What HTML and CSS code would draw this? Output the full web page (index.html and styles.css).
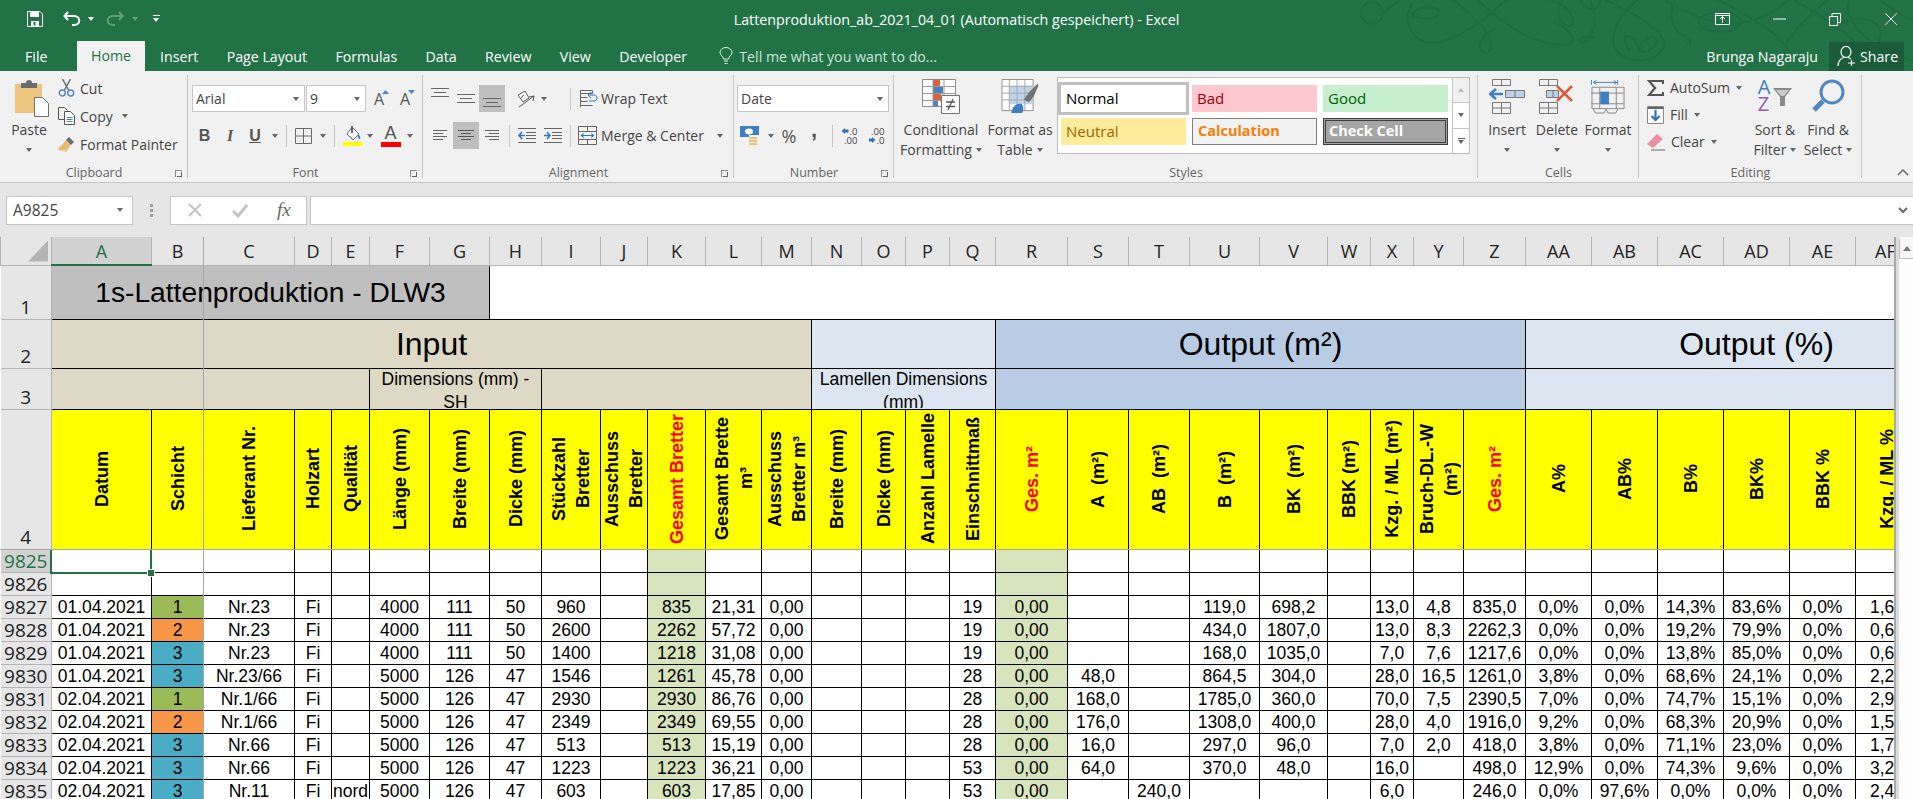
FILE: index.html
```html
<!DOCTYPE html>
<html lang="en">
<head>
<meta charset="utf-8">
<title>Lattenproduktion_ab_2021_04_01 - Excel</title>
<link rel="stylesheet" href="styles.css">
</head>
<body>
<header class="titlebar">
  <svg class="swirl" width="573" height="71" viewBox="1340 0 573 71" fill="none" stroke="#1e6d41" stroke-width="2">
    <ellipse cx="1372" cy="13" rx="11" ry="11"/>
    <path d="M1383 13C1392 6 1398 2 1402 -2"/>
    <path d="M1413 3C1405 14 1405 30 1420 40C1440 50 1475 30 1508 -2"/>
    <path d="M1412 14C1420 5 1438 6 1439 12C1440 19 1420 22 1412 14"/>
    <path d="M1452 -2C1470 15 1490 30 1491 44C1492 55 1480 56 1480 46C1480 38 1488 33 1495 28"/>
    <path d="M1475 -2C1500 20 1530 46 1565 45C1580 44 1572 30 1553 21"/>
    <path d="M1545 -2C1572 5 1575 20 1572 25C1565 30 1550 14 1565 -2"/>
    <path d="M1580 0C1590 15 1600 10 1600 0"/>
    <path d="M1590 0C1600 25 1590 42 1580 44C1578 36 1590 36 1594 38"/>
    <path d="M1600 -2C1630 10 1665 30 1664 45C1660 60 1640 63 1626 58C1605 48 1610 22 1640 -2"/>
    <path d="M1630 50C1620 38 1625 32 1632 38C1640 45 1640 55 1640 50C1640 40 1655 32 1657 40C1658 48 1645 55 1638 50"/>
    <path d="M1675 -2C1668 15 1672 32 1685 36C1692 40 1692 47 1686 44"/>
    <path d="M1665 0C1690 15 1740 45 1790 -2"/>
    <path d="M1715 -2C1760 22 1790 40 1790 58C1785 62 1780 50 1790 38C1800 24 1815 10 1830 -2"/>
    <ellipse cx="1720" cy="22" rx="21" ry="10"/>
    <path d="M1790 -2C1830 20 1860 40 1880 71"/>
    <path d="M1850 -2C1840 20 1870 50 1913 60"/>
    <path d="M1880 0C1900 15 1910 20 1913 20"/>
    <path d="M1835 30C1845 15 1875 15 1880 30C1885 45 1860 60 1840 50"/>
  </svg>
  <div class="title-row">
    <div class="qat">
      <svg class="ic-save" width="16" height="16" viewBox="0 0 16 16"><path d="M.5.5h12.5l2.5 2.5v12.5H.5z" fill="none" stroke="#fff"/><path d="M3 1h9v5H3z" fill="#fff"/><path d="M4 10h8v5.500H4z" fill="#fff"/><path d="M6.500 11h2v3.500h-2z" fill="#217346"/></svg>
      <svg class="ic-undo" width="19" height="16" viewBox="0 0 19 16" fill="none" stroke="#fff" stroke-width="2"><path d="M5 1L1.500 5 5 9"/><path d="M2 5h9c7 0 7 9 0 9h-2"/></svg>
      <span class="caret white undo-caret"></span>
      <svg class="ic-redo" width="19" height="16" viewBox="0 0 19 16" fill="none" stroke="#5f9f7c" stroke-width="2"><path d="M14 1l3.500 4L14 9"/><path d="M17 5H8c-7 0-7 9 0 9h2"/></svg>
      <span class="caret dim redo-caret"></span>
      <span class="qat-more"><span></span></span>
    </div>
    <div class="doc-title">Lattenproduktion_ab_2021_04_01 (Automatisch gespeichert) - Excel</div>
    <div class="window">
      <svg width="15" height="12" viewBox="0 0 15 12" fill="none" stroke="#fff"><path d="M.5.500h14v11H.5zM.5 2.500h14"/><path d="M7.500 10V4M5 6l2.500-2.500L10 6"/></svg>
      <svg width="13" height="12" viewBox="0 0 13 12" fill="none" stroke="#fff"><path d="M0 6h13"/></svg>
      <svg width="12" height="13" viewBox="0 0 12 13" fill="none" stroke="#fff"><path d="M.5 3.500h8v9h-8zM3 3.500V.5h8.500v9H8.500"/></svg>
      <svg width="14" height="14" viewBox="0 0 14 14" fill="none" stroke="#fff"><path d="M1 1l12 12M13 1L1 13"/></svg>
    </div>
  </div>
  <nav class="tabs">
    <span class="tab file">File</span>
    <span class="tab home">Home</span>
    <span class="tab">Insert</span>
    <span class="tab">Page Layout</span>
    <span class="tab">Formulas</span>
    <span class="tab">Data</span>
    <span class="tab">Review</span>
    <span class="tab">View</span>
    <span class="tab">Developer</span>
    <span class="tellme">
      <svg width="14" height="18" viewBox="0 0 14 18" fill="none" stroke="#e4f1ea"><path d="M4.500 12C4 9 1 8 1 5.500a6 5 0 0 1 12 0C13 8 10 9 9.500 12zM5 14h4M5.500 16.500h3"/></svg>
      <span>Tell me what you want to do...</span>
    </span>
    <span class="user">Brunga Nagaraju</span>
    <span class="share">
      <svg width="19" height="21" viewBox="0 0 19 21" fill="none" stroke="#fff" stroke-width="1.200"><ellipse cx="9" cy="6" rx="5" ry="5.500"/><path d="M1 20c0-5 3-8 6-8.500M11 11.500c1 .3 2 .8 3 1.500M14.500 14v6M11 17h7"/></svg>
      Share
    </span>
  </nav>
</header>

<section class="ribbon">
  <div class="group g-clipboard">
    <div class="body">
      <div class="big paste">
        <svg width="34" height="38" viewBox="0 0 34 38"><path d="M0 5h27v29H0z" fill="#ecc57f"/><path d="M6 4h5a3 3 0 0 1 6 0h5v5H6z" fill="#6b6b6b"/><path d="M19.500 18.500h8l6 6v13h-14z" fill="#fff" stroke="#6f6f6f"/></svg>
        <span class="ln">Paste</span>
        <span class="ln"><span class="caret"></span></span>
      </div>
      <div class="small-col">
        <div class="small">
          <svg width="16" height="18" viewBox="0 0 16 18" fill="none"><path d="M4 0l6 11M12 0L6 11" stroke="#6f6f6f" stroke-width="1.500"/><circle cx="3.800" cy="14" r="3" stroke="#4f87c2" stroke-width="1.400"/><circle cx="12.200" cy="14" r="3" stroke="#4f87c2" stroke-width="1.400"/></svg>
          <span>Cut</span>
        </div>
        <div class="small">
          <svg width="17" height="18" viewBox="0 0 17 18" fill="none" stroke="#555"><path d="M.5.500h6l3 3v9h-9z" fill="#f1f1f1"/><path d="M6.500 4.500h6l4 4v9h-10z" fill="#fff"/><path d="M8.500 10.500h6M8.500 12.500h6M8.500 14.500h6" stroke="#4f87c2"/></svg>
          <span>Copy</span><span class="caret copy-caret"></span>
        </div>
        <div class="small">
          <svg width="17" height="16" viewBox="0 0 17 16"><path d="M8 4l5 5-5 7-2-2-1.500 1-1-1-1.500 1-2-2z" fill="#eab974"/><path d="M8 4l3-3 5 5-3 3z" fill="#6d6d6d"/></svg>
          <span>Format Painter</span>
        </div>
      </div>
    </div>
    <div class="label">Clipboard<span class="launcher"></span></div>
  </div>

  <div class="group g-font">
    <div class="rows">
      <div class="row font-1">
        <span class="box">Arial<span class="caret"></span></span>
        <span class="box">9<span class="caret"></span></span>
        <span class="grow-a">A<svg width="7" height="4" viewBox="0 0 7 4"><path d="M0 4l3.500-4L7 4z" fill="#4f87c2"/></svg></span>
        <span class="grow-a shrink">A<svg width="7" height="4" viewBox="0 0 7 4"><path d="M0 0l3.500 4L7 0z" fill="#4f87c2"/></svg></span>
      </div>
      <div class="row font-2">
        <span class="fmt b">B</span>
        <span class="fmt i">I</span>
        <span class="fmt u">U</span>
        <span class="caret"></span>
        <span class="sep"></span>
        <svg width="17" height="16" viewBox="0 0 17 16" fill="none" stroke="#6a6a6a"><path d="M.5.500h16v15H.5zM8.500 1v14M1 8h15"/></svg>
        <span class="caret"></span>
        <span class="sep"></span>
        <svg width="20" height="20" viewBox="0 0 20 20"><path d="M9 1l7 7-6 6-6-6z" fill="#fff" stroke="#666"/><path d="M8 0h2v7H8z" fill="#666"/><path d="M15 8c2 2 3 3 2 5-2 0-3-2-2-5z" fill="#4f87c2"/><path d="M0 16h20v4H0z" fill="#ffff00"/></svg>
        <span class="caret"></span>
        <span class="font-color">A<i></i></span>
        <span class="caret"></span>
      </div>
    </div>
    <div class="label">Font<span class="launcher"></span></div>
  </div>

  <div class="group g-align">
    <div class="rows">
      <div class="row align-1">
        <svg width="18" height="10" viewBox="0 0 18 10" stroke="#666" class="al-top"><path d="M0 .5h18M3 4.500h12M0 8.500h18"/></svg>
        <svg width="18" height="10" viewBox="0 0 18 10" stroke="#666"><path d="M0 .5h18M3 4.500h12M0 8.500h18"/></svg>
        <span class="hl"><svg class="al-bot" width="18" height="10" viewBox="0 0 18 10" stroke="#666"><path d="M0 .5h18M3 4.500h12M0 8.500h18"/></svg></span>
        <span></span>
        <svg width="18" height="18" viewBox="0 0 18 18" fill="none" stroke="#666"><path d="M1 5l7-4 4 7-6 4zM3 9l4-4"/><path d="M2 17L17 6M17 6l-5 1M17 6l-1 5" stroke="#555"/></svg>
        <span class="caret"></span>
        <span></span>
        <span class="sep"></span>
        <span></span>
        <svg width="18" height="18" viewBox="0 0 18 18" fill="none" stroke="#666"><path d="M.5.500h12v3H.5zM.5 7.500h7M.5 11.500h7M.5 15.500h12M.5 0v17"/><path d="M9 11h5c4 0 4-6 0-6H8M11 8l-3-3 3-3" stroke="#2e75b6"/></svg>
        <span></span>
        <span class="t">Wrap Text</span>
      </div>
      <div class="row align-2">
        <svg width="14" height="11" viewBox="0 0 14 11" stroke="#666"><path d="M0 .5h14M0 3.500h10M0 6.500h14M0 9.500h10"/></svg>
        <span class="hl"><svg width="16" height="11" viewBox="0 0 16 11" stroke="#555"><path d="M0 .5h16M3 3.500h10M0 6.500h16M3 9.500h10"/></svg></span>
        <svg width="14" height="11" viewBox="0 0 14 11" stroke="#666"><path d="M0 .5h14M4 3.500h10M0 6.500h14M4 9.500h10"/></svg>
        <span></span>
        <span class="sep"></span>
        <span></span>
        <svg width="18" height="15" viewBox="0 0 18 15" fill="none" stroke="#666"><path d="M0 .5h18M8 4.500h10M8 7.500h10M8 10.500h10M0 14.500h18"/><path d="M7 7.500H1M4 4L1 7.500 4 11" stroke="#2e75b6" stroke-width="1.500"/></svg>
        <span></span>
        <svg width="18" height="15" viewBox="0 0 18 15" fill="none" stroke="#666"><path d="M0 .5h18M8 4.500h10M8 7.500h10M8 10.500h10M0 14.500h18"/><path d="M0 7.500h6M3 4l3 3.500L3 11" stroke="#2e75b6" stroke-width="1.500"/></svg>
        <span></span>
        <span class="sep"></span>
        <span></span>
        <svg width="19" height="19" viewBox="0 0 19 19" fill="none" stroke="#666"><path d="M.5.500h18v18H.5zM.5 5.500h18M.5 13.500h18M9.500 1v4.500M9.500 13.500V18"/><path d="M3 9.500h13M6 7.500l-3 2 3 2M13 7.500l3 2-3 2" stroke="#2e75b6"/></svg>
        <span></span>
        <span class="t">Merge &amp; Center</span>
        <span class="caret"></span>
      </div>
    </div>
    <div class="label">Alignment<span class="launcher"></span></div>
  </div>

  <div class="group g-number">
    <div class="rows">
      <div class="row number-1"><span class="box">Date<span class="caret"></span></span></div>
      <div class="row number-2">
        <svg width="19" height="19" viewBox="0 0 19 19"><path d="M0 0h19v11H0z" fill="#3f7fc1"/><ellipse cx="9" cy="5.500" rx="4" ry="3" fill="#fff"/><path d="M9 9h10v10H9z" fill="#f1f1f1"/><path d="M9 11h8v2H9zM9 14h8v2H9zM9 17h8v2H9z" fill="#eec06f"/></svg>
        <span class="caret"></span>
        <span class="pct">%</span>
        <span class="comma">,</span>
        <span></span>
        <span class="sep"></span>
        <span></span>
        <span class="dec"><b><i class="ar-l"></i>.0</b><b>.00</b></span>
        <span></span>
        <span class="dec"><b>.00</b><b><i class="ar-r"></i>.0</b></span>
      </div>
    </div>
    <div class="label">Number<span class="launcher"></span></div>
  </div>

  <div class="group g-styles">
    <div class="body">
      <div class="big cf">
        <svg width="38" height="35" viewBox="0 0 38 35" fill="none"><path d="M.5.500h33v27H.5z" fill="#fff" stroke="#8a8a8a"/><path d="M11 1h7v6h-7z" fill="#d9623f"/><path d="M11 8h10v6H11z" fill="#4c83bd"/><path d="M11 15h8v6h-8z" fill="#d9623f"/><path d="M11 22h5v5h-5z" fill="#4c83bd"/><path d="M11 1v27M22 1v27M1 7.500h32M1 14.500h32M1 21.500h32" stroke="#9a9a9a"/><path d="M19.500 16.500h18v18h-18z" fill="#fff" stroke="#707070"/><path d="M24 23h9M24 27.500h9M31 20l-5 11" stroke="#555" stroke-width="1.300"/></svg>
        <span class="ln">Conditional</span>
        <span class="ln">Formatting<span class="caret"></span></span>
      </div>
      <div class="big ft">
        <svg width="38" height="36" viewBox="0 0 38 36" fill="none"><path d="M.5.500h32v32H.5z" fill="#fff" stroke="#8f8f8f"/><path d="M8 7h24v19H8z" fill="#bdd3ea"/><path d="M8 1v31M16 1v31M24 1v31M1 7.500h31M1 14.500h31M1 21.500h31" stroke="#a6a6a6"/><path d="M10 35c1-7 6-11 11-9 2 3 2 7 0 9z" fill="#3f7fc1"/><path d="M23 21l5-7 9-9 1 2-5 11-5 6z" fill="#737373"/></svg>
        <span class="ln">Format as</span>
        <span class="ln">Table<span class="caret"></span></span>
      </div>
      <div class="gallery">
        <div class="cells">
          <span class="style s-normal">Normal</span>
          <span class="style s-bad">Bad</span>
          <span class="style s-good">Good</span>
          <span class="style s-neutral">Neutral</span>
          <span class="style s-calc">Calculation</span>
          <span class="style s-check">Check Cell</span>
        </div>
        <div class="gal-scroll">
          <span class="gal-up"><i></i></span>
          <span><i class="down"></i></span>
          <span><b></b><i class="down"></i></span>
        </div>
      </div>
    </div>
    <div class="label">Styles</div>
  </div>

  <div class="group g-cells">
    <div class="body">
      <div class="big w50">
        <svg width="36" height="35" viewBox="0 0 36 35" fill="none" stroke="#777"><path d="M3.500.5h18v6h-18zM12.500 1v5M3.500 23.500h18v11h-18zM12.500 24v10M4 29h17"/><path d="M16.500 11.500h19v7h-19z" fill="#bdd0e9"/><path d="M26 12v6"/><path d="M14 15H2M7 10l-6 5 6 5" stroke="#3f7fc1" stroke-width="2.500"/></svg>
        <span class="ln">Insert</span>
        <span class="ln"><span class="caret"></span></span>
      </div>
      <div class="big w50">
        <svg width="36" height="35" viewBox="0 0 36 35" fill="none" stroke="#777"><path d="M.5.500h18v6H.5zM9.500 1v5M.5 23.500h18v11H.5zM9.500 24v10M1 29h17"/><path d="M7.500 11.500h12v7h-12z" fill="#bdd0e9"/><path d="M14 12v6"/><path d="M18 7l15 15M33 7L18 22" stroke="#d95c38" stroke-width="2.500"/></svg>
        <span class="ln">Delete</span>
        <span class="ln"><span class="caret"></span></span>
      </div>
      <div class="big w52">
        <svg width="36" height="36" viewBox="0 0 36 36" fill="none" stroke="#888"><path d="M1 1v5M28 1v5M3 3.500h24M3 3.500l3-2M3 3.500l3 2M27 3.500l-3-2M27 3.500l-3 2" stroke="#3f7fc1"/><path d="M1.500 8.500h33v22h-33zM9.500 9v22M26.500 9v22M1 14.500h33M1 25.500h33"/><path d="M10 13h9v13h-9z" fill="#3f7fc1" stroke="none"/><path d="M3 31l2 4h9l2-4M16 31l2 4h8l2-4"/></svg>
        <span class="ln">Format</span>
        <span class="ln"><span class="caret"></span></span>
      </div>
    </div>
    <div class="label">Cells</div>
  </div>

  <div class="group g-editing">
    <div class="body">
      <div class="edit-col">
        <div class="small">
          <svg width="17" height="16" viewBox="0 0 17 16" fill="none" stroke="#555" stroke-width="2.200"><path d="M16 4V1H2l6 7-6 7h14v-3"/></svg>
          <span>AutoSum</span><span class="caret"></span>
        </div>
        <div class="small">
          <svg width="17" height="18" viewBox="0 0 17 18" fill="none"><path d="M.5.500h16v17H.5z" fill="#fff" stroke="#888"/><path d="M1 1h15v2H1z" fill="#666"/><path d="M8.500 4v10M4.500 10l4 4 4-4" stroke="#2e75b6" stroke-width="2.200"/></svg>
          <span>Fill</span><span class="caret"></span>
        </div>
        <div class="small">
          <svg width="18" height="18" viewBox="0 0 18 18"><path d="M0 11L10 1l6 5L6 15z" fill="#e88fa2"/><path d="M4 17h14" stroke="#666"/></svg>
          <span>Clear</span><span class="caret"></span>
        </div>
      </div>
      <div class="big sort">
        <div class="sort-ic">
          <span class="az"><b class="a">A</b><b class="z">Z</b></span>
          <svg width="19" height="18" viewBox="0 0 19 18"><path d="M0 0h19l-7 9v9H7V9z" fill="#8a8a8a"/><path d="M3 2h13l-5 6H8z" fill="#c9c9c9"/></svg>
        </div>
        <span class="ln">Sort &amp;</span>
        <span class="ln">Filter<span class="caret"></span></span>
      </div>
      <div class="big find">
        <svg width="34" height="34" viewBox="0 0 34 34" fill="none" stroke="#4f87c2"><circle cx="21" cy="13" r="11" stroke-width="3"/><path d="M12 22L3 31" stroke-width="5"/></svg>
        <span class="ln">Find &amp;</span>
        <span class="ln">Select<span class="caret"></span></span>
      </div>
    </div>
    <div class="label">Editing</div>
  </div>

  <svg class="collapse" width="12" height="7" viewBox="0 0 12 7" fill="none" stroke="#666" stroke-width="1.500"><path d="M1 6l5-5 5 5"/></svg>
</section>

<section class="formula-bar">
  <div class="name-box">A9825<span class="caret"></span></div>
  <div class="grip"><i></i><i></i><i></i></div>
  <div class="fx-box">
    <svg width="16" height="16" viewBox="0 0 16 16" fill="none" stroke="#c4c4c4" stroke-width="2"><path d="M2 2l12 12M14 2L2 14"/></svg>
    <svg width="16" height="15" viewBox="0 0 16 15" fill="none" stroke="#c4c4c4" stroke-width="3"><path d="M1 8l5 5L15 2"/></svg>
    <span class="fx">fx</span>
  </div>
  <div class="formula-input"><svg width="10" height="7" viewBox="0 0 10 7" fill="none" stroke="#666" stroke-width="2"><path d="M1 1l4 4 4-4"/></svg></div>
</section>

<main class="sheet">
  <div class="grid-clip">
    <table class="grid">
      <colgroup>
        <col class="c-r"><col class="c100"><col class="c52"><col class="c91"><col class="c37"><col class="c38"><col class="c60"><col class="c60"><col class="c52"><col class="c59"><col class="c47"><col class="c58"><col class="c56"><col class="c50"><col class="c50"><col class="c44"><col class="c44"><col class="c46"><col class="c72"><col class="c61"><col class="c61"><col class="c70"><col class="c68"><col class="c43"><col class="c43"><col class="c50"><col class="c62"><col class="c66"><col class="c66"><col class="c66"><col class="c66"><col class="c66"><col class="c62">
      </colgroup>
      <thead>
        <tr class="r-head">
          <th class="corner"><i></i></th><th class="sel-col">A</th><th>B</th><th>C</th><th>D</th><th>E</th><th>F</th><th>G</th><th>H</th><th>I</th><th>J</th><th>K</th><th>L</th><th>M</th><th>N</th><th>O</th><th>P</th><th>Q</th><th>R</th><th>S</th><th>T</th><th>U</th><th>V</th><th>W</th><th>X</th><th>Y</th><th>Z</th><th>AA</th><th>AB</th><th>AC</th><th>AD</th><th>AE</th><th class="clip-head">AF</th>
        </tr>
      </thead>
      <tbody>
        <tr class="r1"><th>1</th><td colspan="7" class="title-cell">1s-Lattenproduktion - DLW3</td><td colspan="25" class="blank"></td></tr>
        <tr class="r2"><th>2</th><td colspan="13" class="band beige">Input</td><td colspan="4" class="band light"></td><td colspan="9" class="band blue">Output (m²)</td><td colspan="6" class="band light out-pct">Output (%)</td></tr>
        <tr class="r3"><th>3</th><td colspan="5" class="beige"></td><td colspan="3" class="beige sub"><div>Dimensions (mm) -<br>SH</div></td><td colspan="5" class="beige"></td><td colspan="4" class="light sub"><div>Lamellen Dimensions<br>(mm)</div></td><td colspan="9" class="blue"></td><td colspan="6" class="light"></td></tr>
        <tr class="r4"><th>4</th>
          <td><div><span>Datum</span></div></td><td><div><span>Schicht</span></div></td><td><div><span>Lieferant Nr.</span></div></td><td><div><span>Holzart</span></div></td><td><div><span>Qualität</span></div></td><td><div><span>Länge (mm)</span></div></td><td><div><span>Breite (mm)</span></div></td><td><div><span>Dicke (mm)</span></div></td><td><div><span>Stückzahl<br>Bretter</span></div></td><td><div><span>Ausschuss<br>Bretter</span></div></td><td class="red"><div><span>Gesamt Bretter</span></div></td><td><div><span>Gesamt Brette<br>m³</span></div></td><td><div><span>Ausschuss<br>Bretter m³</span></div></td><td><div><span>Breite (mm)</span></div></td><td><div><span>Dicke (mm)</span></div></td><td><div><span>Anzahl Lamelle</span></div></td><td><div><span>Einschnittmaß</span></div></td><td class="red"><div><span>Ges. m²</span></div></td><td><div><span>A&nbsp;&nbsp;(m²)</span></div></td><td><div><span>AB&nbsp;&nbsp;(m²)</span></div></td><td><div><span>B&nbsp;&nbsp;(m²)</span></div></td><td><div><span>BK&nbsp;&nbsp;(m²)</span></div></td><td><div><span>BBK (m²)</span></div></td><td><div><span>Kzg. / ML (m²)</span></div></td><td><div><span>Bruch-DL.-W<br>(m²)</span></div></td><td class="red"><div><span>Ges. m²</span></div></td><td><div><span>A%</span></div></td><td><div><span>AB%</span></div></td><td><div><span>B%</span></div></td><td><div><span>BK%</span></div></td><td><div><span>BBK %</span></div></td><td><div><span>Kzg. / ML %</span></div></td>
        </tr>
        <tr class="d"><th class="sel-row">9825</th><td></td><td></td><td></td><td></td><td></td><td></td><td></td><td></td><td></td><td></td><td class="g"></td><td></td><td></td><td></td><td></td><td></td><td></td><td class="g"></td><td></td><td></td><td></td><td></td><td></td><td></td><td></td><td></td><td></td><td></td><td></td><td></td><td></td><td></td></tr>
        <tr class="d"><th>9826</th><td></td><td></td><td></td><td></td><td></td><td></td><td></td><td></td><td></td><td></td><td class="g"></td><td></td><td></td><td></td><td></td><td></td><td></td><td class="g"></td><td></td><td></td><td></td><td></td><td></td><td></td><td></td><td></td><td></td><td></td><td></td><td></td><td></td><td></td></tr>
        <tr class="d"><th>9827</th><td>01.04.2021</td><td class="s1">1</td><td>Nr.23</td><td>Fi</td><td></td><td>4000</td><td>111</td><td>50</td><td>960</td><td></td><td class="g">835</td><td>21,31</td><td>0,00</td><td></td><td></td><td></td><td>19</td><td class="g">0,00</td><td></td><td></td><td>119,0</td><td>698,2</td><td></td><td>13,0</td><td>4,8</td><td>835,0</td><td>0,0%</td><td>0,0%</td><td>14,3%</td><td>83,6%</td><td>0,0%</td><td class="af">1,6</td></tr>
        <tr class="d"><th>9828</th><td>01.04.2021</td><td class="s2">2</td><td>Nr.23</td><td>Fi</td><td></td><td>4000</td><td>111</td><td>50</td><td>2600</td><td></td><td class="g">2262</td><td>57,72</td><td>0,00</td><td></td><td></td><td></td><td>19</td><td class="g">0,00</td><td></td><td></td><td>434,0</td><td>1807,0</td><td></td><td>13,0</td><td>8,3</td><td>2262,3</td><td>0,0%</td><td>0,0%</td><td>19,2%</td><td>79,9%</td><td>0,0%</td><td class="af">0,6</td></tr>
        <tr class="d"><th>9829</th><td>01.04.2021</td><td class="s3">3</td><td>Nr.23</td><td>Fi</td><td></td><td>4000</td><td>111</td><td>50</td><td>1400</td><td></td><td class="g">1218</td><td>31,08</td><td>0,00</td><td></td><td></td><td></td><td>19</td><td class="g">0,00</td><td></td><td></td><td>168,0</td><td>1035,0</td><td></td><td>7,0</td><td>7,6</td><td>1217,6</td><td>0,0%</td><td>0,0%</td><td>13,8%</td><td>85,0%</td><td>0,0%</td><td class="af">0,6</td></tr>
        <tr class="d"><th>9830</th><td>01.04.2021</td><td class="s3">3</td><td>Nr.23/66</td><td>Fi</td><td></td><td>5000</td><td>126</td><td>47</td><td>1546</td><td></td><td class="g">1261</td><td>45,78</td><td>0,00</td><td></td><td></td><td></td><td>28</td><td class="g">0,00</td><td>48,0</td><td></td><td>864,5</td><td>304,0</td><td></td><td>28,0</td><td>16,5</td><td>1261,0</td><td>3,8%</td><td>0,0%</td><td>68,6%</td><td>24,1%</td><td>0,0%</td><td class="af">2,2</td></tr>
        <tr class="d"><th>9831</th><td>02.04.2021</td><td class="s1">1</td><td>Nr.1/66</td><td>Fi</td><td></td><td>5000</td><td>126</td><td>47</td><td>2930</td><td></td><td class="g">2930</td><td>86,76</td><td>0,00</td><td></td><td></td><td></td><td>28</td><td class="g">0,00</td><td>168,0</td><td></td><td>1785,0</td><td>360,0</td><td></td><td>70,0</td><td>7,5</td><td>2390,5</td><td>7,0%</td><td>0,0%</td><td>74,7%</td><td>15,1%</td><td>0,0%</td><td class="af">2,9</td></tr>
        <tr class="d"><th>9832</th><td>02.04.2021</td><td class="s2">2</td><td>Nr.1/66</td><td>Fi</td><td></td><td>5000</td><td>126</td><td>47</td><td>2349</td><td></td><td class="g">2349</td><td>69,55</td><td>0,00</td><td></td><td></td><td></td><td>28</td><td class="g">0,00</td><td>176,0</td><td></td><td>1308,0</td><td>400,0</td><td></td><td>28,0</td><td>4,0</td><td>1916,0</td><td>9,2%</td><td>0,0%</td><td>68,3%</td><td>20,9%</td><td>0,0%</td><td class="af">1,5</td></tr>
        <tr class="d"><th>9833</th><td>02.04.2021</td><td class="s3">3</td><td>Nr.66</td><td>Fi</td><td></td><td>5000</td><td>126</td><td>47</td><td>513</td><td></td><td class="g">513</td><td>15,19</td><td>0,00</td><td></td><td></td><td></td><td>28</td><td class="g">0,00</td><td>16,0</td><td></td><td>297,0</td><td>96,0</td><td></td><td>7,0</td><td>2,0</td><td>418,0</td><td>3,8%</td><td>0,0%</td><td>71,1%</td><td>23,0%</td><td>0,0%</td><td class="af">1,7</td></tr>
        <tr class="d"><th>9834</th><td>02.04.2021</td><td class="s3">3</td><td>Nr.66</td><td>Fi</td><td></td><td>5000</td><td>126</td><td>47</td><td>1223</td><td></td><td class="g">1223</td><td>36,21</td><td>0,00</td><td></td><td></td><td></td><td>53</td><td class="g">0,00</td><td>64,0</td><td></td><td>370,0</td><td>48,0</td><td></td><td>16,0</td><td></td><td>498,0</td><td>12,9%</td><td>0,0%</td><td>74,3%</td><td>9,6%</td><td>0,0%</td><td class="af">3,2</td></tr>
        <tr class="d"><th>9835</th><td>02.04.2021</td><td class="s3">3</td><td>Nr.11</td><td>Fi</td><td class="nord">nord</td><td>5000</td><td>126</td><td>47</td><td>603</td><td></td><td class="g">603</td><td>17,85</td><td>0,00</td><td></td><td></td><td></td><td>53</td><td class="g">0,00</td><td></td><td>240,0</td><td></td><td></td><td></td><td>6,0</td><td></td><td>246,0</td><td>0,0%</td><td>97,6%</td><td>0,0%</td><td>0,0%</td><td>0,0%</td><td class="af">2,4</td></tr>
      </tbody>
    </table>
    <span class="freeze-v"></span>
    <span class="freeze-h"></span>
    <span class="selection"><i></i></span>
  </div>
  <aside class="vscroll"><span class="v-up"><i></i></span></aside>
</main>
</body>
</html>
```
FILE: styles.css
```css
* { box-sizing: border-box; }
html, body { margin: 0; height: 100%; }
body {
  width: 1913px;
  height: 799px;
  overflow: hidden;
  display: flex;
  flex-direction: column;
  background: #e6e6e6;
  font-family: "Open Sans", "Noto Sans", sans-serif;
  font-size: 14px;
  color: #444;
}
svg { display: block; flex: none; }

/* caret used everywhere */
.caret {
  display: inline-block;
  flex: none;
  width: 0;
  height: 0;
  border-left: 3.5px solid transparent;
  border-right: 3.5px solid transparent;
  border-top: 4px solid #666;
  vertical-align: middle;
}
.caret.white { border-top-color: #fff; }
.caret.dim { border-top-color: #5f9f7c; }

/* title bar */
.titlebar {
  position: relative;
  height: 71px;
  flex: none;
  background: #217346;
  color: #fff;
  overflow: hidden;
}
.swirl { position: absolute; left: 1340px; top: 0; }
.title-row {
  position: relative;
  height: 41px;
  display: grid;
  grid-template-columns: 1fr 500px 1fr;
  align-items: center;
}
.qat { display: flex; align-items: center; padding: 0 0 3px 27px; }
.ic-undo { margin-left: 20px; }
.undo-caret { margin-left: 6px; }
.ic-redo { margin-left: 11px; }
.redo-caret { margin-left: 8px; }
.qat-more {
  margin-left: 15px;
  width: 7px;
  height: 8px;
  border-top: 1px solid #fff;
  padding-top: 2px;
}
.qat-more span {
  display: block;
  width: 0; height: 0;
  border-left: 3.5px solid transparent;
  border-right: 3.5px solid transparent;
  border-top: 4px solid #fff;
}
.doc-title { text-align: center; font-size: 14.250px; padding-bottom: 3px; white-space: nowrap; }
.window {
  display: flex;
  align-items: center;
  justify-content: flex-end;
  padding: 0 15px 3px 0;
  gap: 43px;
}
.tabs {
  position: relative;
  height: 30px;
  display: flex;
  align-items: center;
  font-size: 14.200px;
}
.tab { padding: 0 14.200px; white-space: nowrap; }
.tab.file { width: 77px; padding: 0 0 0 25px; }
.tab.home {
  height: 30px;
  width: 68px;
  padding: 0;
  line-height: 29px;
  text-align: center;
  background: #f1f1f1;
  color: #217346;
}
.tab.home + .tab { padding-left: 15px; }
.tellme { display: flex; align-items: center; gap: 6px; margin-left: 18px; color: #cbe6d6; }
.user { margin-left: auto; margin-right: 11px; }
.share {
  display: flex;
  align-items: center;
  gap: 4px;
  width: 75px;
  height: 29px;
  margin-right: 9px;
  padding-left: 8px;
  background: #1a5c38;
}

/* ribbon */
.ribbon {
  position: relative;
  flex: none;
  display: flex;
  height: 112px;
  background: #f1f1f1;
  border-bottom: 1px solid #c6c6c6;
}
.group { position: relative; display: flex; flex-direction: column; height: 111px; flex: none; }
.group::after {
  content: "";
  position: absolute;
  right: 0; top: 4px; bottom: 4px;
  width: 1px;
  background: #c6c6c6;
}
.g-clipboard { width: 188px; }
.g-font { width: 235px; }
.g-align { width: 311px; }
.g-number { width: 160px; }
.g-styles { width: 584px; }
.g-cells { width: 161px; }
.g-editing { width: 223px; }
.body { flex: 1; display: flex; min-height: 0; }
.rows { flex: 1; display: flex; flex-direction: column; gap: 10px; padding: 14px 0 0 4px; min-height: 0; }
.row { display: grid; height: 27px; align-items: center; justify-items: center; }
.label { position: relative; height: 18px; line-height: 18px; text-align: center; font-size: 12.500px; color: #666; }
.launcher {
  position: absolute;
  right: 6px; top: 6px;
  width: 7px; height: 7px;
  border-left: 1px solid #888;
  border-top: 1px solid #888;
}
.launcher::after {
  content: "";
  position: absolute;
  right: 0; bottom: 0;
  width: 4px; height: 4px;
  border-right: 1px solid #666;
  border-bottom: 1px solid #666;
}
.big {
  display: flex;
  flex-direction: column;
  align-items: center;
  padding-top: 8px;
  flex: none;
  white-space: nowrap;
}
.big > svg, .sort-ic { height: 41px; }
.big > svg { height: auto; margin-bottom: auto; }
.ln { height: 20px; line-height: 20px; display: flex; align-items: center; justify-content: center; gap: 4px; }
.small { display: flex; align-items: center; height: 28px; white-space: nowrap; }
.box {
  position: relative;
  display: flex;
  align-items: center;
  justify-content: space-between;
  justify-self: stretch;
  height: 27px;
  padding: 0 5px 0 3px;
  background: #fff;
  border: 1px solid #c6c6c6;
  font-size: 14px;
}
.sep { width: 1px; height: 22px; background: #c6c6c6; }
.t { justify-self: start; white-space: nowrap; }
.hl {
  display: flex;
  align-items: center;
  justify-content: center;
  justify-self: stretch;
  height: 27px;
  background: #bfbfbf;
}

/* clipboard */
.paste { width: 34px; margin-left: 12px; height: 93px; }
.paste > svg { height: 38px; margin-bottom: 3px; align-self: flex-start; margin-left: 3px; }
.small-col { margin-left: 12px; padding-top: 3px; }
.small-col .small svg { width: 17px; margin-right: 5px; }
.copy-caret { margin-left: 9px; }

/* font */
.font-1 { grid-template-columns: 113px 60px 26px 24px; column-gap: 1px; }
.font-2 { grid-template-columns: 25px 26px 24px 16px 6px 29px 10px 12px 26px 8px 33px 6px; }
.grow-a { position: relative; font-size: 16px; color: #555; padding-right: 2px; }
.grow-a svg { position: absolute; right: -3px; top: 2px; }
.fmt { font-family: "Liberation Sans", sans-serif; font-size: 16px; color: #555; }
.fmt.b { font-weight: 700; }
.fmt.i { font-style: italic; font-weight: 700; font-family: "Liberation Serif", serif; }
.fmt.u { text-decoration: underline; font-weight: 700; }
.font-color {
  display: flex;
  flex-direction: column;
  align-items: center;
  font-family: "Liberation Sans", sans-serif;
  font-size: 18px;
  line-height: 17px;
  color: #555;
  width: 20px;
}
.font-color i { display: block; width: 20px; height: 5px; background: #ff0000; }

/* alignment */
.align-1 { grid-template-columns: 26px 26px 26px 12px 18px 18px 17px 1px 9px 18px 3px 1fr; }
.align-2 { grid-template-columns: 26px 26px 26px 4px 1px 8px 18px 8px 18px 8px 1px 7px 19px 4px 110px 18px; }
.al-top { align-self: start; margin-top: 3px; }
.al-bot { margin-top: 8px; }

/* number */
.g-number .rows { padding-left: 3px; }
.number-1 { grid-template-columns: 152px; }
.number-2 { grid-template-columns: 25px 17px 20px 30px 3px 1px 9px 15px 12px 15px; }
.pct { font-size: 18px; color: #555; }
.comma { font-family: "Liberation Sans", sans-serif; font-size: 22px; font-weight: 700; line-height: 12px; color: #555; margin-bottom: 12px; }
.dec { display: flex; flex-direction: column; font-size: 9.500px; line-height: 9px; color: #444; align-items: flex-end; }
.dec b { font-weight: 400; display: flex; align-items: center; gap: 1px; }
.ar-l, .ar-r { display: block; width: 7px; height: 6px; background: #2e75b6; }
.ar-l { clip-path: polygon(0 50%, 50% 0, 50% 25%, 100% 25%, 100% 75%, 50% 75%, 50% 100%); }
.ar-r { clip-path: polygon(100% 50%, 50% 0, 50% 25%, 0 25%, 0 75%, 50% 75%, 50% 100%); }

/* styles */
.cf { width: 94px; }
.ft { width: 64px; }
.cf > svg, .ft > svg { height: 35px; margin-bottom: 6px; }
.gallery {
  display: flex;
  width: 413px;
  height: 77px;
  margin: 6px 0 0 5px;
  background: #fff;
  border: 1px solid #bdbdbd;
}
.cells {
  flex: 1;
  display: grid;
  grid-template-columns: repeat(3, 125px);
  grid-template-rows: repeat(2, 27px);
  gap: 6px;
  padding: 7px 0 0 3px;
}
.style { display: flex; align-items: center; padding-left: 5px; font-size: 15px; line-height: 1; }
.s-normal { color: #000; outline: 3px solid #c0c0c0; }
.s-bad { background: #ffc7ce; color: #9c0006; }
.s-good { background: #c6efce; color: #006100; }
.s-neutral { background: #ffeb9c; color: #9c6500; }
.s-calc { background: #f2f2f2; border: 1px solid #7f7f7f; color: #fa7d00; font-weight: 700; font-size: 14.500px; }
.s-check { background: #a5a5a5; border: 3px double #3f3f3f; color: #fff; font-weight: 700; padding-left: 3px; font-size: 14.500px; }
.gal-scroll { width: 17px; display: flex; flex-direction: column; border-left: 1px solid #c6c6c6; }
.gal-scroll span {
  flex: 1;
  display: flex;
  flex-direction: column;
  align-items: center;
  justify-content: center;
  gap: 1px;
  border-bottom: 1px solid #c6c6c6;
}
.gal-scroll span:last-child { border-bottom: 0; }
.gal-up { background: #f0f0f0; }
.gal-scroll i {
  width: 0; height: 0;
  border-left: 3.500px solid transparent;
  border-right: 3.500px solid transparent;
  border-bottom: 4px solid #bbb;
}
.gal-scroll i.down { border-bottom: 0; border-top: 4px solid #666; }
.gal-scroll b { width: 7px; height: 1px; background: #666; }

/* cells */
.g-cells .body { padding-left: 4px; }
.w50 { width: 50px; }
.w52 { width: 52px; }
.g-cells .big > svg { height: 35px; margin-bottom: 6px; }

/* editing */
.g-editing .body { padding-left: 8px; }
.edit-col { width: 100px; padding-top: 3px; display: flex; flex-direction: column; }
.edit-col .small { height: 27px; gap: 6px; }
.sort { width: 56px; }
.find { width: 50px; }
.sort-ic { display: flex; align-items: flex-start; gap: 0; }
.az { display: flex; flex-direction: column; line-height: 17px; font-size: 20px; margin-right: 3px; margin-top: -1px; }
.az b { font-weight: 400; }
.az .a { color: #3f7fc1; }
.az .z { color: #8f5db0; }
.sort-ic svg { margin-top: 9px; }
.find > svg { height: 34px; margin-bottom: 7px; }
.collapse { position: absolute; right: 4px; top: 98px; }

/* formula bar */
.formula-bar {
  flex: none;
  display: flex;
  align-items: center;
  height: 54px;
  padding: 0 0 0 6px;
  background: #e6e6e6;
}
.name-box {
  display: flex;
  align-items: center;
  justify-content: space-between;
  width: 127px;
  height: 29px;
  padding: 0 9px 0 6px;
  background: #fff;
  border: 1px solid #c6c6c6;
  font-size: 15.500px;
}
.grip { width: 37px; display: flex; flex-direction: column; align-items: center; gap: 2px; }
.grip i { width: 3px; height: 3px; background: #9f9f9f; }
.fx-box {
  display: flex;
  align-items: center;
  width: 137px;
  height: 29px;
  padding-left: 16px;
  gap: 29px;
  background: #fff;
  border: 1px solid #c6c6c6;
}
.fx { font-family: "Liberation Serif", serif; font-style: italic; font-size: 19px; color: #666; }
.formula-input {
  flex: 1;
  display: flex;
  align-items: center;
  justify-content: flex-end;
  height: 29px;
  margin-left: 3px;
  padding-right: 5px;
  background: #fff;
  border: 1px solid #c6c6c6;
  border-right: 0;
}

/* sheet */
.sheet { flex: 1; display: flex; min-height: 0; overflow: hidden; }
.grid-clip { position: relative; width: 1894px; height: 562px; overflow: hidden; flex: none; }
.grid {
  table-layout: fixed;
  width: 1917px;
  border-collapse: collapse;
  font-family: "Liberation Sans", sans-serif;
  font-size: 17.500px;
  color: #000;
  background: #fff;
}
.c-r { width: 51px; }
.c100 { width: 100px; } .c52 { width: 52px; } .c91 { width: 91px; } .c37 { width: 37px; }
.c38 { width: 38px; } .c60 { width: 60px; } .c59 { width: 59px; } .c47 { width: 47px; }
.c58 { width: 58px; } .c56 { width: 56px; } .c50 { width: 50px; } .c44 { width: 44px; }
.c46 { width: 46px; } .c72 { width: 72px; } .c61 { width: 61px; } .c70 { width: 70px; }
.c68 { width: 68px; } .c43 { width: 43px; } .c62 { width: 62px; } .c66 { width: 66px; }

.grid th, .grid td { padding: 0; overflow: hidden; white-space: nowrap; }
.grid td { border: 1px solid #000; text-align: center; vertical-align: middle; line-height: 20px; }
.grid th {
  background: #e6e6e6;
  border: 1px solid #b4b4b4;
  font-family: "Open Sans", sans-serif;
  font-size: 18px;
  font-weight: 400;
  color: #222;
  text-align: center;
  vertical-align: bottom;
  line-height: 23px;
}
.r-head { height: 28px; }
.r-head th { border-top: 0; vertical-align: middle; line-height: 26px; }
.corner { position: relative; border-left: 0; }
.corner i {
  position: absolute;
  right: 3px; bottom: 3px;
  width: 20px; height: 21px;
  background: #b4b4b4;
  clip-path: polygon(100% 0, 100% 100%, 0 100%);
}
.sel-col { background: #d2d2d2 !important; color: #217346 !important; border-bottom: 2px solid #217346 !important; }
.sel-row { background: #d2d2d2 !important; color: #217346 !important; }
.clip-head { text-align: left !important; padding-left: 19px !important; }
.grid tbody th { border-left: 0; font-size: 19px; }
.grid .d th { line-height: 21px; }

.r1 { height: 54px; }
.r2 { height: 49px; }
.r3 { height: 41px; }
.r4 { height: 140px; }
.d { height: 23px; }
.title-cell { background: #bfbfbf; font-size: 28.200px; }
.blank { border-top: 0 !important; border-right: 0 !important; }
.band { font-size: 32px; line-height: 36px !important; }
.beige { background: #ddd9c4; }
.light { background: #dce6f1; }
.blue { background: #b8cce4; }
.out-pct { padding-left: 70px !important; }
.sub { vertical-align: top !important; line-height: 23px !important; }
.sub div { height: 40px; overflow: hidden; margin-top: -1px; }
.r4 td { background: #ffff00; font-weight: 700; font-size: 18px; }
.r4 td div { height: 139px; display: flex; align-items: center; justify-content: center; overflow: hidden; }
.r4 td span {
  writing-mode: vertical-rl;
  transform: rotate(180deg);
  white-space: nowrap;
  text-align: center;
  line-height: 24px;
}
.red { color: #ff0000; }
.g { background: #d8e4bc; }
.s1 { background: #9bbb59; }
.s2 { background: #f79646; }
.s3 { background: #4bacc6; }
.nord { text-align: left !important; padding-left: 1px !important; }
.af { text-align: left !important; padding-left: 14px !important; }

.freeze-v { position: absolute; left: 203px; top: 0; bottom: 0; width: 1px; background: #a6a6a6; }
.freeze-h { position: absolute; left: 0; right: 0; top: 312px; height: 1px; background: #a6a6a6; }
.selection {
  position: absolute;
  left: 50px; top: 313px;
  width: 102px; height: 24px;
  border: solid #217346;
  border-width: 0 2px 2px 2px;
}
.selection i {
  position: absolute;
  right: -4px; bottom: -4px;
  width: 6px; height: 6px;
  background: #217346;
  outline: 1px solid #fff;
}
.vscroll {
  flex: 1;
  border-left: 2px solid #a8a8a8;
  background: linear-gradient(to right, #dcdcdc 3px, #fdfdfd 3px);
  position: relative;
}
.v-up {
  position: absolute;
  left: 3px; right: 0; top: 2px;
  height: 20px;
  display: flex;
  align-items: center;
  justify-content: center;
  background: #f7f7f7;
  border: 1px solid #c0c0c0;
  border-right: 0;
  border-top: 0;
}
.v-up i {
  width: 0; height: 0;
  border-left: 4px solid transparent;
  border-right: 4px solid transparent;
  border-bottom: 5px solid #777;
}
```
